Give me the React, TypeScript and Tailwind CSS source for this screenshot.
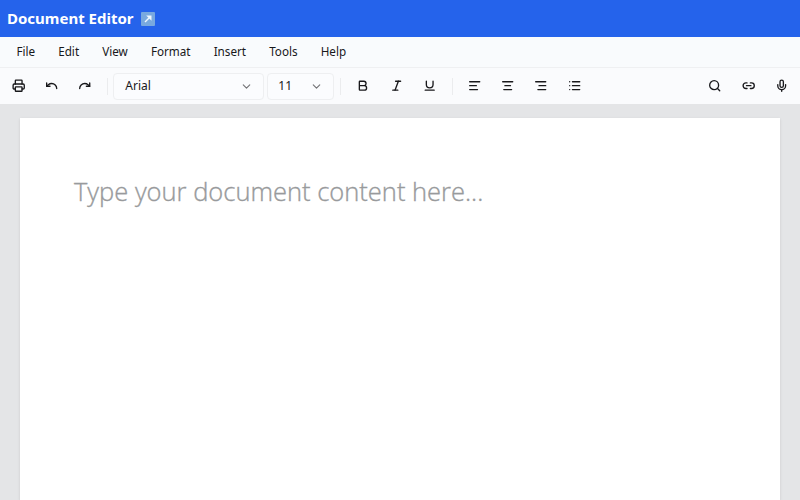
import React from "react";
import { Printer, Undo, Redo, ChevronDown, Bold, Italic, Underline, AlignLeft, AlignCenter, AlignRight, List, Search, Link2, Mic } from "lucide-react";

const menus = ["File", "Edit", "View", "Format", "Insert", "Tools", "Help"];

function Tool({ icon: Icon }: { icon: React.ElementType }) {
  return (
    <button className="flex h-[27px] w-[33.3px] shrink-0 items-center justify-center">
      <Icon size={13.4} strokeWidth={2.4} />
    </button>
  );
}

export default function App() {
  return (
    <div className="flex h-[500px] w-[800px] flex-col overflow-hidden bg-[#e4e5e7] font-['Noto_Sans',sans-serif] text-[#18181b]">
      <header className="flex h-[37px] shrink-0 items-center gap-[7px] bg-[#2563eb] pl-[7px] text-white">
        <h1 className="text-[15px] font-bold">Document Editor</h1>
        <svg width="14" height="14" viewBox="0 0 14 14">
          <rect width="14" height="14" rx="1" fill="#79a9df" />
          <path d="M4 10 9 5" stroke="#eef7ff" strokeWidth="1.5" fill="none" />
          <path d="M5.2 3.5H10.5V8.8Z" fill="#eef7ff" />
        </svg>
      </header>
      <nav className="flex h-[31px] shrink-0 items-center gap-[23.1px] border-b border-[#eff0f2] bg-[#f9fbfd] pl-[16.4px] text-[11.7px]">
        {menus.map((m) => <span key={m}>{m}</span>)}
      </nav>
      <div className="flex h-[36px] shrink-0 items-center bg-[#fafbfd] pr-[1.7px] pl-[1.9px]">
        <Tool icon={Printer} /><Tool icon={Undo} /><Tool icon={Redo} />
        <div className="ml-[5px] h-[17px] w-px bg-[#ebecee]" />
        <button className="ml-[5.5px] flex h-[27px] w-[151px] items-center justify-between rounded border border-[#eeeff1] bg-[#fbfcfe] pr-[10px] pl-[11px] text-[12px]">Arial<ChevronDown size={13} className="opacity-60" /></button>
        <button className="ml-[3px] flex h-[27px] w-[67px] items-center justify-between rounded border border-[#eeeff1] bg-[#fbfcfe] px-[10px] text-[12px]">11<ChevronDown size={13} className="opacity-60" /></button>
        <div className="mr-[5px] ml-[6px] h-[17px] w-px bg-[#ebecee]" />
        <Tool icon={Bold} /><Tool icon={Italic} /><Tool icon={Underline} />
        <div className="mr-[5px] ml-[5.6px] h-[17px] w-px bg-[#ebecee]" />
        <Tool icon={AlignLeft} /><Tool icon={AlignCenter} /><Tool icon={AlignRight} /><Tool icon={List} />
        <div className="ml-auto flex"><Tool icon={Search} /><Tool icon={Link2} /><Tool icon={Mic} /></div>
      </div>
      <main className="flex min-h-0 flex-1 px-[20px] pt-[14px]">
        <div className="flex-1 bg-white px-[54px] pt-[54px] font-['Open_Sans','Noto_Sans',sans-serif] text-[25.5px] leading-[38px] font-light text-[#989a9c] shadow-sm [-webkit-text-stroke:0.35px_#989a9c]">Type your document content here...</div>
      </main>
    </div>
  );
}
